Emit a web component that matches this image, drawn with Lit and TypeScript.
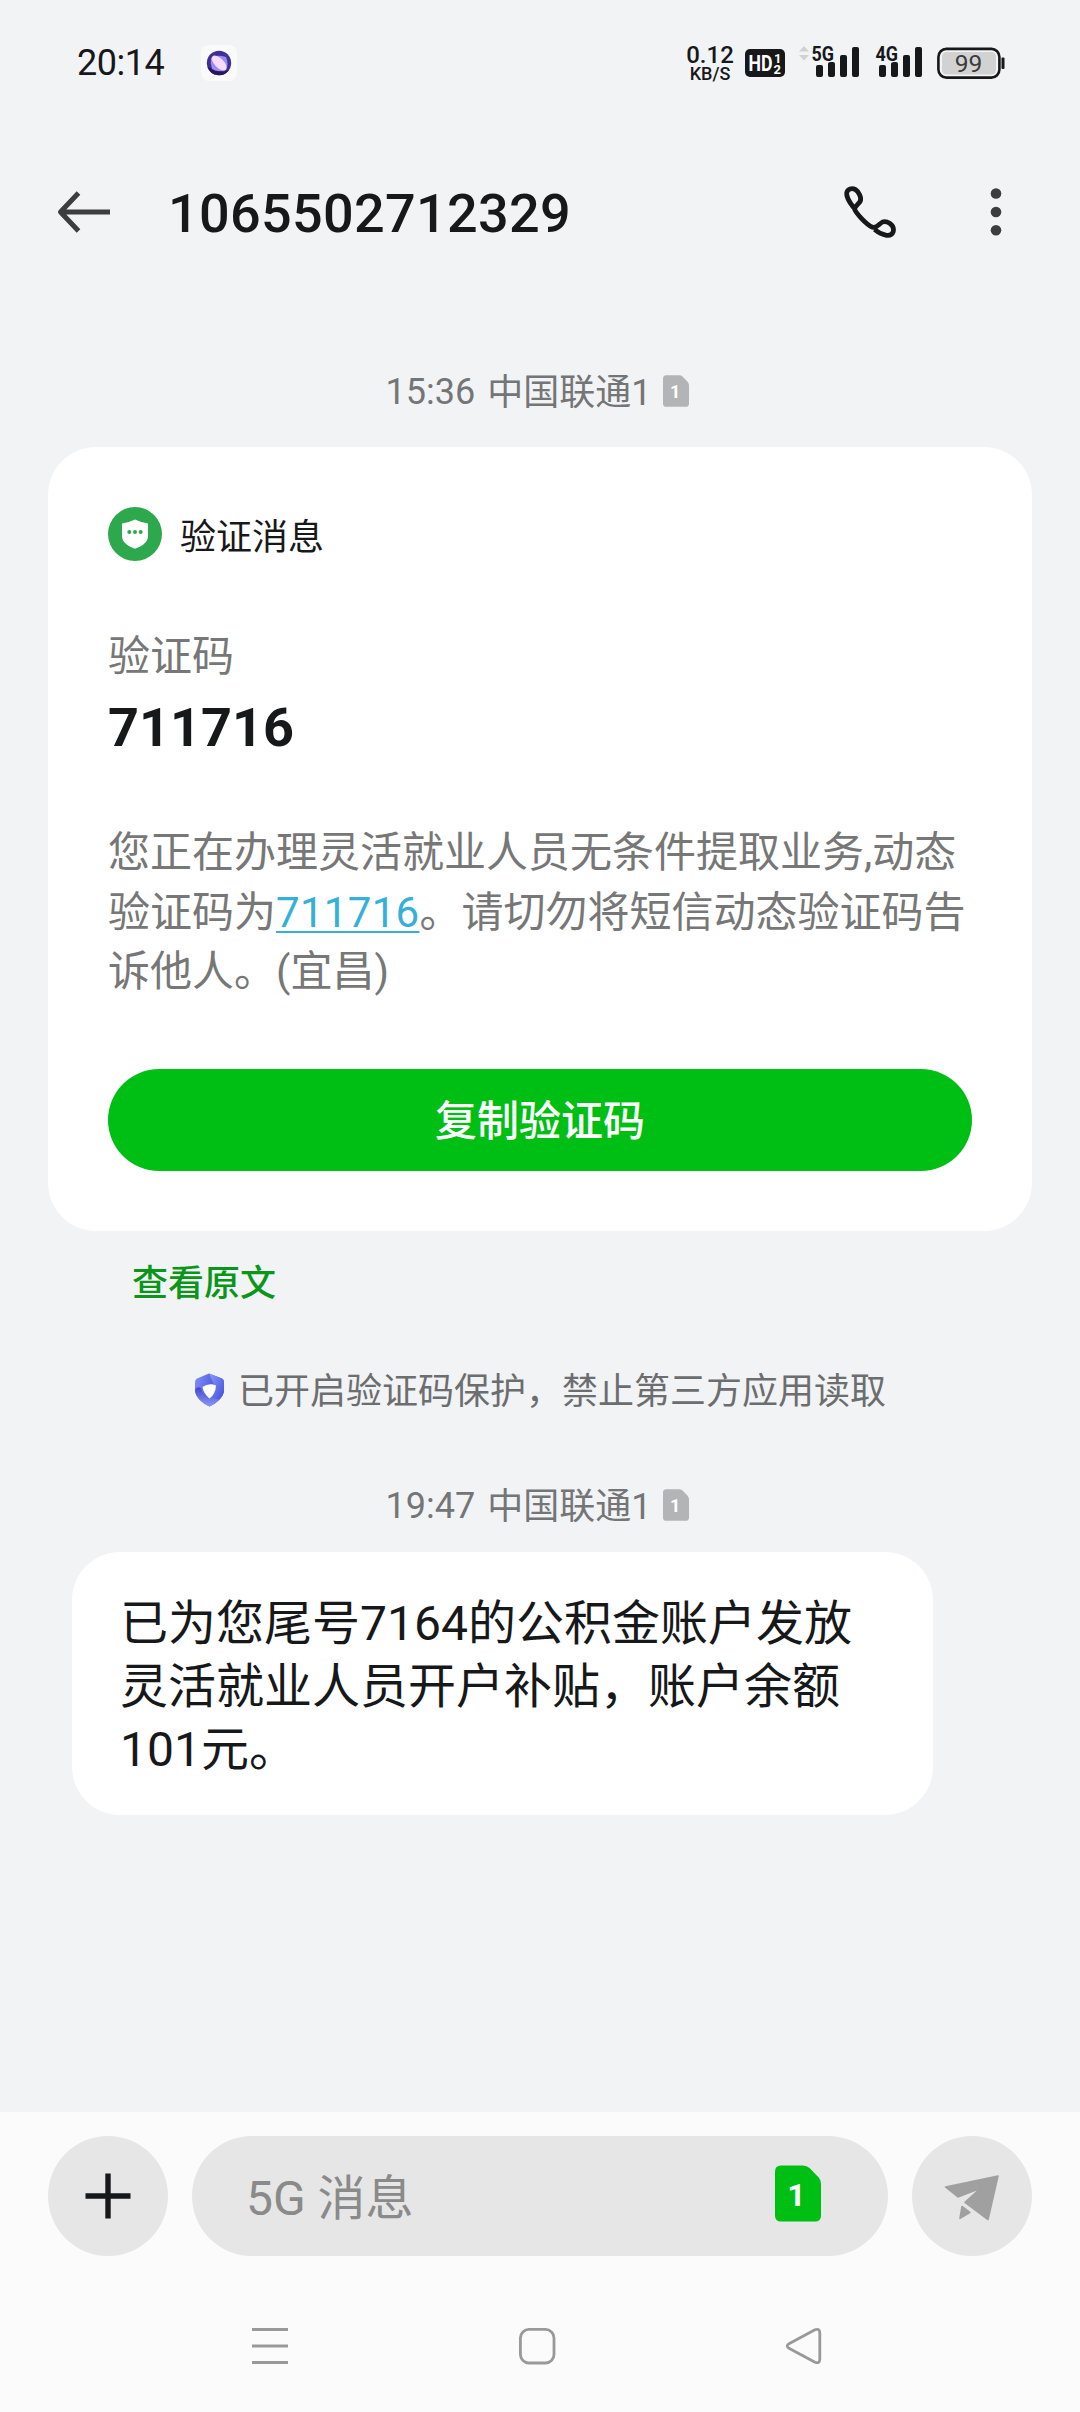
import { LitElement, html, css, svg } from "lit";
import { customElement, property } from "lit/decorators.js";

const fontStack = css`Roboto, "Noto Sans CJK SC", sans-serif`;

@customElement("sim-badge")
class SimBadge extends LitElement {
  @property() slotNumber = "1";
  static styles = css`
    :host { display: block; width: 26px; height: 32px; color: #b3b4b5; }
    svg { display: block; width: 100%; height: 100%; }
    .digit { font-family: ${fontStack}; font-weight: 700; }
  `;
  render() {
    return html`<svg viewBox="0 0 46 56">
      <path fill="currentColor" d="M6 0H28Q32 0 34.500 2.500L43.500 11.800Q46 14.500 46 18V50Q46 56 40 56H6Q0 56 0 50V6Q0 0 6 0Z"/>
      <text class="digit" x="21.500" y="40.500" font-size="32" text-anchor="middle" fill="#fff">${this.slotNumber}</text>
    </svg>`;
  }
}

@customElement("status-bar")
class StatusBar extends LitElement {
  static styles = css`
    :host {
      display: flex; align-items: center; height: 126px; box-sizing: border-box;
      padding: 0 75px 0 77px; color: #17181a; font-family: ${fontStack};
    }
    .time { font-size: 36px; line-height: 42px; width: 124px; white-space: nowrap; letter-spacing: -0.5px; }
    .app { width: 36px; height: 36px; display: block; }
    .spacer { flex: 1; }
    .speed { display: flex; flex-direction: column; align-items: center; width: 46px; font-weight: 500; padding-top: 2px; }
    .rate { font-size: 24px; line-height: 20px; }
    .unit { font-size: 18px; line-height: 18px; }
    .hd { width: 40px; height: 28px; margin-left: 12px; }
    .sig { height: 52px; display: block; }
    .first { width: 62px; margin-left: 13px; }
    .second { width: 48px; margin-left: 15px; }
    .battery { width: 68px; height: 32px; margin-left: 14px; }
    svg { display: block; font-family: ${fontStack}; }
  `;
  bars(x: number) {
    return svg`<g fill="#17181a">
      <rect x=${x} y="20" width="7" height="12" rx="2"/>
      <rect x=${x + 12} y="17" width="7" height="15" rx="2"/>
      <rect x=${x + 24} y="10" width="7" height="22" rx="2"/>
      <rect x=${x + 36} y="2" width="7" height="30" rx="2"/>
    </g>`;
  }
  label(text: string, x: number) {
    return svg`<text x=${x} y="15.500" font-size="21" font-weight="700" textLength="22.500" lengthAdjust="spacingAndGlyphs" fill="#17181a" stroke="#f2f3f5" stroke-width="2.500" paint-order="stroke">${text}</text>`;
  }
  render() {
    return html`
      <div class="time">20:14</div>
      <svg class="app" viewBox="0 0 36 36">
        <rect width="36" height="36" rx="8" fill="#fafafb"/>
        <circle cx="18" cy="18" r="12.200" fill="#3f3193"/>
        <path d="M6.500 22A12.200 12.200 0 0 0 28 25L22 27Z" fill="#2a1558"/>
        <path d="M10 13Q15 9 25 12Q28 19 25 25Q17 28 11 24Q9 18 10 13Z" fill="#9a8cf6"/>
        <ellipse cx="18.200" cy="18" rx="4.600" ry="9.500" transform="rotate(-44 18.200 18)" fill="#f8dcfb"/>
      </svg>
      <div class="spacer"></div>
      <div class="speed"><span class="rate">0.12</span><span class="unit">KB/S</span></div>
      <svg class="hd" viewBox="0 0 40 28">
        <rect width="40" height="28" rx="5" fill="#17181a"/>
        <g fill="#fff" font-weight="700">
          <text x="3.500" y="21.500" font-size="21.500" textLength="24" lengthAdjust="spacingAndGlyphs">HD</text>
          <text x="29" y="13.500" font-size="13">1</text>
          <text x="28.500" y="25" font-size="13">2</text>
        </g>
      </svg>
      <svg class="sig first" viewBox="0 -8 62 52">
        <path d="M1 6.500L6 1L11 6.500ZM1 10L6 15.500L11 10Z" fill="#d0d1d2"/>
        ${this.bars(18)}${this.label("5G", 13.5)}
      </svg>
      <svg class="sig second" viewBox="0 -8 48 52">${this.bars(4)}${this.label("4G", 0.5)}</svg>
      <svg class="battery" viewBox="0 0 68 32">
        <rect x="1.400" y="1.900" width="61" height="28.700" rx="8" fill="#f4f4f4" stroke="#17181a" stroke-width="2.600"/>
        <rect x="5" y="5" width="54" height="22.500" rx="4.500" fill="#d2d2d3"/>
        <rect x="64.500" y="10.500" width="3" height="11.500" rx="1" fill="#17181a"/>
        <text x="31.500" y="24.500" font-size="24.500" text-anchor="middle" fill="#3a3b3c">99</text>
      </svg>
    `;
  }
}

@customElement("chat-header")
class ChatHeader extends LitElement {
  @property() name = "";
  static styles = css`
    :host {
      display: flex; align-items: center; height: 172px; box-sizing: border-box;
      padding: 0 66px 0 56px; font-family: ${fontStack};
    }
    svg { display: block; }
    .back { width: 56px; height: 48px; }
    .title {
      flex: 1; margin: 3px 0 0 56px; font-size: 54px; line-height: 64px; font-weight: 500;
      letter-spacing: 0.3px; color: #17181a;
    }
    .phone { width: 56px; height: 56px; margin-right: 80px; }
    .more { width: 36px; height: 56px; }
  `;
  render() {
    return html`
      <svg class="back" viewBox="0 0 56 48" fill="none" stroke="#3c3d3e" stroke-width="5" stroke-linejoin="round">
        <path d="M4.500 24H54M22.500 5L4.500 24L22.500 43"/>
      </svg>
      <div class="title">${this.name}</div>
      <svg class="phone" viewBox="842 184 56 56" fill="none" stroke="#17181a" stroke-width="4.800" stroke-linejoin="round">
        <path d="M853.600 207.500C848.500 201 846.300 196 846.700 193C847.300 188.800 852 187.500 855.500 189.600C858.500 191.500 861.800 197.500 860.300 201C859.300 203.400 855.300 205.800 854.500 209C856 213 866 224.500 872.500 227.300C877 228.500 878.800 224 882.500 222C887 220.500 893.300 224.500 893.500 229.500C893.400 234 890.500 235.800 886.500 235.300C883.500 234.800 878 232.300 874.500 229.500"/>
      </svg>
      <svg class="more" viewBox="0 0 36 56" fill="#3c3d3e">
        <circle cx="18" cy="9.500" r="5.300"/><circle cx="18" cy="28" r="5.300"/><circle cx="18" cy="46.300" r="5.300"/>
      </svg>
    `;
  }
}

@customElement("time-stamp")
class TimeStamp extends LitElement {
  @property() time = "";
  @property() carrier = "";
  static styles = css`
    :host {
      display: flex; justify-content: center; align-items: center; height: 48px;
      font: 36px/48px ${fontStack}; color: #747576; padding-right: 5px;
    }
    .time { margin-right: 12px; padding-top: 2px; }
    .carrier { margin-right: 12px; padding-top: 3px; }
    .sim { margin-top: -1px; }
  `;
  render() {
    return html`<span class="time">${this.time}</span><span class="carrier">${this.carrier}</span><sim-badge class="sim"></sim-badge>`;
  }
}

@customElement("code-card")
class CodeCard extends LitElement {
  @property() code = "";
  static styles = css`
    :host {
      display: flex; flex-direction: column; height: 784px; box-sizing: border-box;
      margin: 0 48px; padding: 60px; border-radius: 48px; background: #fff; font-family: ${fontStack};
    }
    .head { display: flex; align-items: center; gap: 18px; height: 54px; font-size: 36px; line-height: 54px; color: #17181a; }
    .name { padding-top: 7px; }
    .shield { width: 54px; height: 54px; display: block; }
    .label { margin-top: 69px; font-size: 42px; line-height: 54px; color: #777; }
    .code { margin-top: 12px; font-size: 54px; line-height: 64px; font-weight: 700; color: #17181a; }
    .body { margin-top: 63px; font-size: 42px; line-height: 59.700px; color: #777; white-space: nowrap; }
    .link { color: #35b0d8; text-decoration: underline; text-decoration-thickness: 2px; text-underline-offset: 4px; letter-spacing: 0.3px; }
    .copy {
      margin-top: auto; height: 102px; box-sizing: border-box; border: 0; border-radius: 51px; padding: 4px 0 0;
      background: #00bf14; color: #fff; font: 500 42px/98px ${fontStack};
    }
  `;
  render() {
    return html`
      <div class="head">
        <svg class="shield" viewBox="0 0 54 54">
          <circle cx="27" cy="27" r="27" fill="#2ea84c"/>
          <path d="M27 12.500Q33 15.500 40 16.500V29C40 35.500 33.500 39.500 27 41.700C20.500 39.500 14 35.500 14 29V16.500Q21 15.500 27 12.500Z" fill="#fff"/>
          <g fill="#2ea84c"><circle cx="21.300" cy="25" r="2"/><circle cx="27" cy="25" r="2"/><circle cx="32.700" cy="25" r="2"/></g>
        </svg>
        <span class="name">验证消息</span>
      </div>
      <div class="label">验证码</div>
      <div class="code">${this.code}</div>
      <div class="body">您正在办理灵活就业人员无条件提取业务,动态<br>验证码为<span class="link">${this.code}</span>。请切勿将短信动态验证码告<br>诉他人。(宜昌)</div>
      <button class="copy">复制验证码</button>
    `;
  }
}

@customElement("composer-bar")
class ComposerBar extends LitElement {
  static styles = css`
    :host {
      display: flex; flex-direction: column; height: 300px; box-sizing: border-box;
      padding: 24px 48px 0; background: #fbfbfb; font-family: ${fontStack};
    }
    .row { display: flex; gap: 24px; height: 120px; }
    .round { width: 120px; height: 120px; border-radius: 50%; background: #e6e6e6; }
    .field {
      flex: 1; display: flex; align-items: center; justify-content: space-between; box-sizing: border-box;
      padding: 0 67px 0 54px; border-radius: 60px; background: #e6e6e6;
    }
    .hint { font-size: 48px; line-height: 60px; color: #8a8a8a; padding-top: 6px; }
    .sim { width: 46px; height: 57px; color: #00bf14; margin-top: -6px; }
    svg { display: block; }
    .nav { display: flex; justify-content: space-between; padding: 68px 206px 0 200px; }
    .key { width: 44px; height: 44px; }
  `;
  render() {
    return html`
      <div class="row">
        <svg class="round" viewBox="0 0 120 120"><path d="M37.500 60H82.500M60 37.500V82.500" stroke="#17181a" stroke-width="5.400" stroke-linecap="butt"/></svg>
        <div class="field"><span class="hint">5G 消息</span><sim-badge class="sim"></sim-badge></div>
        <svg class="round" viewBox="912 2136 120 120" fill="#a0a0a0" stroke="#a0a0a0" stroke-width="1.600" stroke-linejoin="round">
          <path d="M945.500 2187L998 2176L988 2219.500L965 2202.300L980.500 2188.300L958 2197Z"/>
          <path d="M962 2206.500L969.800 2212.500L960 2218.300Z"/>
        </svg>
      </div>
      <div class="nav">
        <svg class="key" viewBox="0 0 44 44" stroke="#999" stroke-width="3"><path d="M4 5.500H40M4 22H40M4 38.500H40"/></svg>
        <svg class="key" viewBox="0 0 44 44" stroke="#999" stroke-width="2.800" fill="none"><rect x="5.400" y="5.400" width="33.600" height="33.600" rx="8.500"/></svg>
        <svg class="key" viewBox="0 0 44 44" stroke="#999" stroke-width="2.800" fill="none" stroke-linejoin="round"><path d="M6.500 20L33 5.800Q37.800 4 37.800 9V35Q37.800 40 33 38.200L6.500 24Q4 22 6.500 20Z"/></svg>
      </div>
    `;
  }
}

@customElement("app-root")
class AppRoot extends LitElement {
  static styles = css`
    :host {
      display: flex; flex-direction: column; width: 1080px; height: 2412px; overflow: hidden;
      background: #f2f3f5; font-family: ${fontStack};
    }
    .thread { flex: 1; display: flex; flex-direction: column; padding-top: 69px; min-height: 0; }
    .card { margin-top: 32px; }
    .original { margin: 29px 0 0 132px; font-size: 36px; line-height: 48px; font-weight: 500; color: #0a9618; }
    .notice {
      display: flex; justify-content: center; align-items: center; gap: 13px; height: 48px; margin-top: 58px;
      font-size: 36px; line-height: 48px; color: #6c6d6f;
    }
    .words { padding-top: 4px; }
    .guard { width: 31px; height: 34px; display: block; }
    .second { margin-top: 67px; }
    .bubble {
      align-self: flex-start; width: 861px; height: 263px; box-sizing: border-box; margin: 23px 0 0 72px;
      padding: 40px 48px 0; border-radius: 48px; background: #fff; color: #17181a;
      font-size: 48px; line-height: 63px; white-space: nowrap;
    }
  `;
  render() {
    return html`
      <status-bar></status-bar>
      <chat-header name="1065502712329"></chat-header>
      <div class="thread">
        <time-stamp time="15:36" carrier="中国联通1"></time-stamp>
        <code-card class="card" code="711716"></code-card>
        <div class="original">查看原文</div>
        <div class="notice">
          <svg class="guard" viewBox="0 0 31 34">
            <defs>
              <linearGradient id="ga" x1="0" y1="0" x2="1" y2="0.300"><stop offset="0" stop-color="#8391f8"/><stop offset="1" stop-color="#3a45d4"/></linearGradient>
              <linearGradient id="gb" x1="0" y1="0" x2="0" y2="1"><stop offset="0" stop-color="#4048cc"/><stop offset="1" stop-color="#8a9af8"/></linearGradient>
              <linearGradient id="gc" x1="0" y1="0" x2="1" y2="1"><stop offset="0" stop-color="#8c9afa"/><stop offset="1" stop-color="#3d4cdc"/></linearGradient>
            </defs>
            <path d="M15 0.500L28 5.500Q30 6.500 30 9V17C30 24 23 30 15.500 33.500C8 30 1 24 1 17V9Q1 6.500 3 5.500Z" fill="url(#ga)"/>
            <path d="M15 0.500L28 5.500Q30 6.500 30 9V17C30 21 27 26 22 29L16 25Q24 18 20 12Z" fill="url(#gc)"/>
            <path d="M1 17C1.500 25 9 30.500 15.500 33.500Q21 31 25.500 26.500L16 25Q9 24 7 15Q2 13 1 17Z" fill="url(#gb)"/>
            <path d="M8.500 14Q15 9.500 22 12.500Q21.500 21 15.500 25.500Q9.500 20.500 8.500 14Z" fill="#fff"/>
          </svg>
          <span class="words">已开启验证码保护，禁止第三方应用读取</span>
        </div>
        <time-stamp class="second" time="19:47" carrier="中国联通1"></time-stamp>
        <div class="bubble">已为您尾号7164的公积金账户发放<br>灵活就业人员开户补贴，账户余额<br>101元。</div>
      </div>
      <composer-bar></composer-bar>
    `;
  }
}
